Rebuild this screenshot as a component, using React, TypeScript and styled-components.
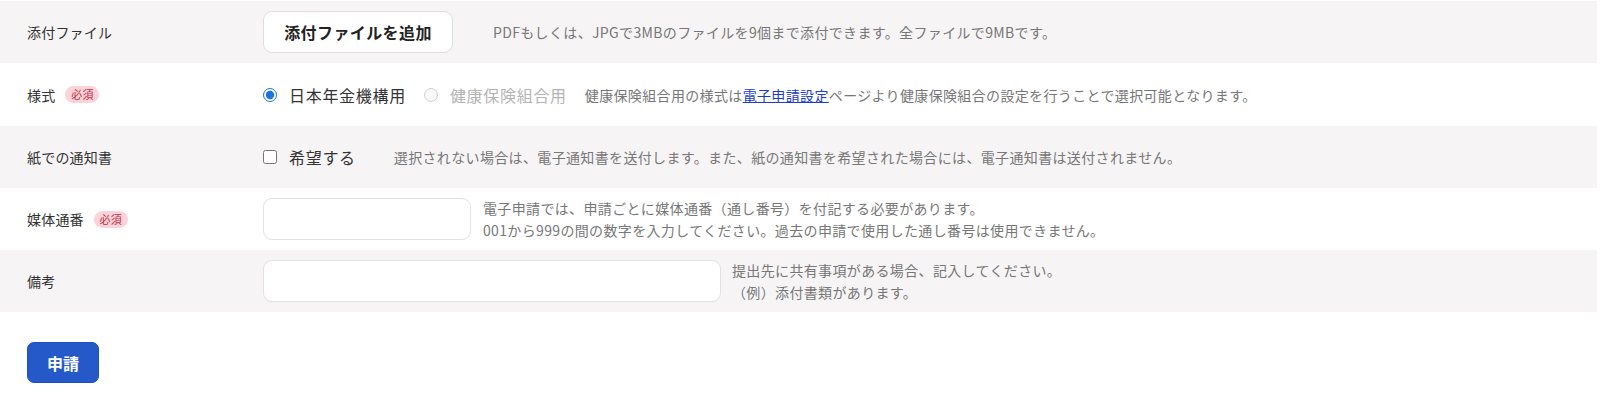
import React from "react";
import styled, { createGlobalStyle } from "styled-components";

const GlobalStyle = createGlobalStyle`
  html, body { margin: 0; padding: 0; background: #fff; }
  body {
    font-family: "Noto Sans CJK JP", "Noto Sans", sans-serif;
    color: #333;
  }
  * { box-sizing: border-box; }
`;

const Page = styled.div`
  width: 1600px;
  height: 419px;
  padding: 1px 3px 0 0;
  background: #fff;
`;

const Form = styled.div`
  display: flex;
  flex-direction: column;
`;

const Row = styled.div<{ $alt?: boolean; $h?: number }>`
  display: grid;
  grid-template-columns: 236px 1fr;
  align-items: center;
  height: ${(p) => p.$h ?? 62}px;
  padding-left: 27px;
  background: ${(p) => (p.$alt ? "#f6f4f5" : "#ffffff")};
`;

const Label = styled.div`
  display: flex;
  align-items: center;
  gap: 10px;
  font-size: 14px;
  line-height: 20px;
  color: #333;
  letter-spacing: 0.2px;
`;

const Badge = styled.span`
  display: inline-flex;
  align-items: center;
  justify-content: center;
  width: 34px;
  height: 17px;
  border-radius: 9px;
  background: #fbd3d9;
  color: #c0304a;
  font-size: 11px;
  line-height: 17px;
`;

const Controls = styled.div<{ $gap?: number }>`
  display: flex;
  align-items: center;
  gap: ${(p) => p.$gap ?? 20}px;
`;

const FileButton = styled.button`
  width: 190px;
  height: 42px;
  border: 1px solid #dedede;
  border-radius: 9px;
  background: #fff;
  font-family: inherit;
  font-size: 16px;
  font-weight: 700;
  color: #222;
  letter-spacing: 0.4px;
  cursor: pointer;
`;

const Help = styled.div`
  font-size: 14px;
  line-height: 22px;
  color: #777;
  letter-spacing: 0.35px;
  white-space: nowrap;
`;

const Link = styled.a`
  color: #1a3cc9;
  text-decoration: underline;
`;

const Choice = styled.label<{ $disabled?: boolean }>`
  display: inline-flex;
  align-items: center;
  gap: 12px;
  font-size: 16px;
  line-height: 22px;
  letter-spacing: 0.7px;
  color: ${(p) => (p.$disabled ? "#b4b4b4" : "#333")};
  input {
    margin: 0;
    width: 14px;
    height: 14px;
    accent-color: #1a73e8;
  }
`;

const TextBox = styled.input<{ $w: number }>`
  width: ${(p) => p.$w}px;
  height: 42px;
  border: 1px solid #e2e2e2;
  border-radius: 9px;
  background: #fff;
  padding: 0 10px;
  font-family: inherit;
  font-size: 14px;
  outline: none;
`;

const Footer = styled.div`
  padding: 30px 0 0 27px;
`;

const SubmitButton = styled.button`
  width: 72px;
  height: 41px;
  border: 1px solid #1b4fc0;
  border-radius: 7px;
  background: #2559c9;
  color: #fff;
  font-family: inherit;
  font-size: 16px;
  font-weight: 700;
  cursor: pointer;
`;

export default function App() {
  return (
    <Page>
      <GlobalStyle />
      <Form>
        <Row $alt $h={62}>
          <Label>添付ファイル</Label>
          <Controls $gap={40}>
            <FileButton type="button">添付ファイルを追加</FileButton>
            <Help>PDFもしくは、JPGで3MBのファイルを9個まで添付できます。全ファイルで9MBです。</Help>
          </Controls>
        </Row>
        <Row $h={63}>
          <Label>
            様式<Badge>必須</Badge>
          </Label>
          <Controls $gap={18}>
            <Choice>
              <input type="radio" name="style" defaultChecked />
              日本年金機構用
            </Choice>
            <Choice $disabled>
              <input type="radio" name="style" disabled />
              健康保険組合用
            </Choice>
            <Help>
              健康保険組合用の様式は<Link href="#">電子申請設定</Link>ページより健康保険組合の設定を行うことで選択可能となります。
            </Help>
          </Controls>
        </Row>
        <Row $alt>
          <Label>紙での通知書</Label>
          <Controls $gap={38}>
            <Choice>
              <input type="checkbox" />
              希望する
            </Choice>
            <Help>選択されない場合は、電子通知書を送付します。また、紙の通知書を希望された場合には、電子通知書は送付されません。</Help>
          </Controls>
        </Row>
        <Row>
          <Label>
            媒体通番<Badge>必須</Badge>
          </Label>
          <Controls $gap={12}>
            <TextBox $w={208} />
            <Help>
              電子申請では、申請ごとに媒体通番（通し番号）を付記する必要があります。
              <br />
              001から999の間の数字を入力してください。過去の申請で使用した通し番号は使用できません。
            </Help>
          </Controls>
        </Row>
        <Row $alt>
          <Label>備考</Label>
          <Controls $gap={11}>
            <TextBox $w={458} />
            <Help>
              提出先に共有事項がある場合、記入してください。
              <br />
              （例）添付書類があります。
            </Help>
          </Controls>
        </Row>
      </Form>
      <Footer>
        <SubmitButton type="button">申請</SubmitButton>
      </Footer>
    </Page>
  );
}
